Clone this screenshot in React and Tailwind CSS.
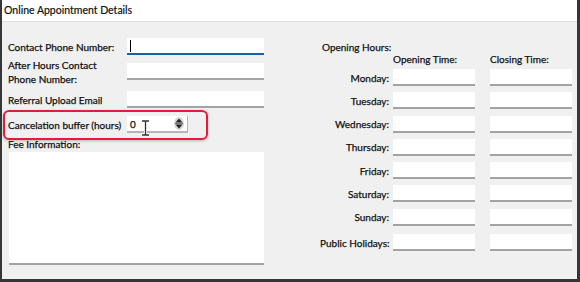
import React from "react";

const font = { fontFamily: 'Lato, "Noto Sans", sans-serif' };

function Field({ className = "", focused = false, children }) {
  return (
    <div
      className={
        "relative h-[17px] shrink-0 bg-white " +
        (focused ? "border-b-2 border-[#1b5fa8] " : "border-b-2 border-[#a3a3a3] ") +
        className
      }
    >
      {children}
    </div>
  );
}

function DayRow({ label, className = "" }) {
  return (
    <div className={"flex items-center h-[17px] " + className}>
      <div className="w-[70px] shrink-0 whitespace-nowrap text-right pr-[1px]">{label}</div>
      <Field className="ml-[3px] w-[82px]" />
      <Field className="ml-[15px] w-[82px]" />
    </div>
  );
}

export default function App() {
  const days = ["Monday:", "Tuesday:", "Wednesday:", "Thursday:", "Friday:", "Saturday:", "Sunday:"];
  return (
    <div className="w-[580px] h-[282px] bg-[#363636] pl-[2px] pr-[3px] pb-[3px] pt-0" style={font}>
      <div className="relative w-full h-full bg-[#f0f0f0] flex flex-col">
        <div className="h-[22px] shrink-0 bg-white border-b border-[#dedede] flex items-center pl-[2px] text-[10.5px] text-[#111] [-webkit-text-stroke:0.2px_#111]">
          Online Appointment Details
        </div>
        <div className="flex flex-1 [-webkit-text-stroke:0.25px_#111]">
          {/* Left column */}
          <div className="w-[256px] shrink-0 ml-[6px] flex flex-col pt-[16px] text-[10px] leading-[12px] text-[#111]">
            <div className="flex items-center h-[17px]">
              <div className="w-[119px] shrink-0 whitespace-nowrap">Contact Phone Number:</div>
              <Field focused className="w-[137px]">
                <div className="absolute left-[3px] top-[2px] w-[1px] h-[12px] bg-black" />
              </Field>
            </div>
            <div className="flex items-center h-[17px] mt-[8px]">
              <div className="w-[119px] shrink-0 leading-[14px] whitespace-nowrap">
                After Hours Contact
                <br />
                Phone Number:
              </div>
              <Field className="w-[137px]" />
            </div>
            <div className="flex items-center h-[17px] mt-[11px]">
              <div className="w-[119px] shrink-0 whitespace-nowrap">Referral Upload Email</div>
              <Field className="w-[137px]" />
            </div>
            <div className="flex items-center h-[17px] mt-[8px]">
              <div className="w-[119px] shrink-0 whitespace-nowrap">Cancelation buffer (hours)</div>
              <div className="relative h-[17px] w-[61px] shrink-0 bg-white border-b-2 border-r border-[#b5b5b5] flex items-center pl-[3px]">
                0
                <svg className="absolute right-[3px] top-[1px]" width="10" height="13" viewBox="0 0 10 13">
                  <ellipse cx="5" cy="6.5" rx="5" ry="6.5" fill="#d6d6d6" />
                  <path d="M5 1.5 L8.5 5.5 L1.5 5.5 Z" fill="#222" />
                  <path d="M1 6.5 L9 6.5" stroke="#555" strokeWidth="0.8" />
                  <path d="M1.5 7.5 L8.5 7.5 L5 11.5 Z" fill="#222" />
                </svg>
              </div>
            </div>
            <div className="mt-[5px] h-[12px] whitespace-nowrap">Fee Information:</div>
            <div className="mt-[2px] ml-[1px] h-[113px] bg-white border-b-2 border-[#a3a3a3]" />
          </div>

          {/* Right column */}
          <div className="ml-[56px] flex flex-col pt-[19px] text-[10px] leading-[12px] text-[#111]">
            <div className="pl-[2px] h-[12px] whitespace-nowrap">Opening Hours:</div>
            <div className="flex h-[12px] items-center whitespace-nowrap">
              <div className="w-[73px] shrink-0" />
              <div className="w-[97px] shrink-0">Opening Time:</div>
              <div>Closing Time:</div>
            </div>
            <div className="flex flex-col gap-[6.3px] mt-[4px]">
              {days.map((d) => (
                <DayRow key={d} label={d} />
              ))}
              <DayRow label="Public Holidays:" className="mt-[2px]" />
            </div>
          </div>
        </div>

        {/* Annotation highlight */}
        <div className="absolute left-[1px] top-[110px] w-[205px] h-[30px] rounded-[6px] border-[2.5px] border-[#e31b3c] shadow-[0_1px_3px_rgba(0,0,0,0.25)]" />
        {/* I-beam cursor */}
        <svg className="absolute left-[139px] top-[120px]" width="9" height="16" viewBox="0 0 9 16">
          <path d="M1 1 H8 M4.5 1 V15 M1 15 H8" stroke="#fff" strokeWidth="3" fill="none" />
          <path d="M1 1 H8 M4.5 1 V15 M1 15 H8" stroke="#333" strokeWidth="1.3" fill="none" />
        </svg>
      </div>
    </div>
  );
}
